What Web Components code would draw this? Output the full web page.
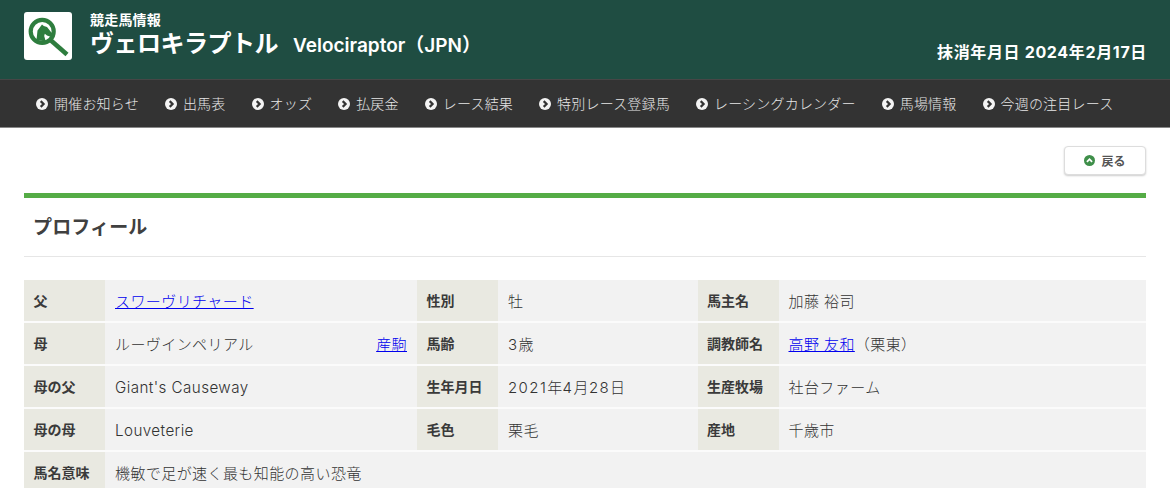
<!DOCTYPE html>
<html lang="ja"><head><meta charset="utf-8">
<style>
html,body{margin:0;padding:0;background:#fff;overflow:hidden}
body{font-family:Inter,"Noto Sans CJK JP","Noto Sans",sans-serif;color:#333;height:488px}
</style></head><body>
<jra-page>
  <jra-header slot="header" sub="競走馬情報" name="ヴェロキラプトル" en="Velociraptor（JPN）" date="抹消年月日 2024年2月17日"></jra-header>
  <jra-nav slot="nav">
    <jra-nav-item>開催お知らせ</jra-nav-item>
    <jra-nav-item>出馬表</jra-nav-item>
    <jra-nav-item>オッズ</jra-nav-item>
    <jra-nav-item>払戻金</jra-nav-item>
    <jra-nav-item>レース結果</jra-nav-item>
    <jra-nav-item>特別レース登録馬</jra-nav-item>
    <jra-nav-item>レーシングカレンダー</jra-nav-item>
    <jra-nav-item>馬場情報</jra-nav-item>
    <jra-nav-item>今週の注目レース</jra-nav-item>
  </jra-nav>
  <jra-back>戻る</jra-back>
  <jra-section title="プロフィール">
    <jra-grid>
      <jra-cell label="父"><a href="#">スワーヴリチャード</a></jra-cell>
      <jra-cell label="性別">牡</jra-cell>
      <jra-cell label="馬主名">加藤 裕司</jra-cell>
      <jra-cell label="母">ルーヴインペリアル<a href="#" slot="end">産駒</a></jra-cell>
      <jra-cell label="馬齢"><jra-num>3</jra-num>歳</jra-cell>
      <jra-cell label="調教師名"><a href="#">高野 友和</a>（栗東）</jra-cell>
      <jra-cell label="母の父"><jra-lat>Giant's Causeway</jra-lat></jra-cell>
      <jra-cell label="生年月日"><jra-num>2021</jra-num>年<jra-num>4</jra-num>月<jra-num>28</jra-num>日</jra-cell>
      <jra-cell label="生産牧場">社台ファーム</jra-cell>
      <jra-cell label="母の母"><jra-lat>Louveterie</jra-lat></jra-cell>
      <jra-cell label="毛色">栗毛</jra-cell>
      <jra-cell label="産地">千歳市</jra-cell>
      <jra-cell label="馬名意味" wide>機敏で足が速く最も知能の高い恐竜</jra-cell>
    </jra-grid>
  </jra-section>
</jra-page>
<script>
function def(name, html){
  customElements.define(name, class extends HTMLElement{
    constructor(){super();this.attachShadow({mode:'open'}).innerHTML=html;}
    connectedCallback(){
      const r=this.shadowRoot;
      r.querySelectorAll('[data-a]').forEach(e=>{e.textContent=this.getAttribute(e.dataset.a)||''});
      if(name==='jra-cell'&&this.hasAttribute('wide'))this.style.gridColumn='1 / -1';
    }
  });
}
def('jra-page',`<style>:host{display:block}
.main{padding:0 24px}</style>
<slot name="header"></slot><slot name="nav"></slot><div class="main"><slot></slot></div>`);
def('jra-header',`<style>
:host{display:flex;justify-content:space-between;background:#1f4d42;color:#fff;height:79px;box-sizing:border-box;padding:12px 24px 0}
.left{display:flex;gap:18px}
.logo{width:48px;height:48px;display:block}
.tx{display:flex;flex-direction:column}
.sub{font-size:14px;font-weight:700;line-height:16px;letter-spacing:.2px}
.row{display:flex;align-items:baseline;gap:15px;line-height:34px;margin-top:-1px}
.nm{font-size:24px;font-weight:700;letter-spacing:-.5px}
.en{font-size:19px;font-weight:600}
.date{font-size:16px;font-weight:700;letter-spacing:.65px;align-self:flex-start;margin-top:27px;line-height:26px;margin-right:-1px}
</style>
<div class="left"><svg class="logo" viewBox="0 0 48 48">
<rect width="48" height="48" rx="3" fill="#fff"/>
<circle cx="18.2" cy="19.4" r="11.5" fill="none" stroke="#2e7d3e" stroke-width="4.2"/>
<path fill="none" stroke="#2e7d3e" stroke-width="4.5" d="M27 28.5L43 42.5"/>
<path fill="#2e7d3e" d="M12.5 28L13.5 18.5 18 12.5 19.8 14 23 15 28.2 21.5 26.5 24.8 23 23.5 20.8 21.8 20.2 24 21.8 29.5Z"/>
</svg>
<div class="tx"><div class="sub" data-a="sub"></div><div class="row"><div class="nm" data-a="name"></div><div class="en" data-a="en"></div></div></div></div>
<div class="date" data-a="date"></div>`);
def('jra-nav',`<style>:host{display:flex;gap:26px;background:#333;height:49px;box-sizing:border-box;padding:0 36px;align-items:center;border-top:1px solid #464646;border-bottom:1px solid #888}</style><slot></slot>`);
def('jra-nav-item',`<style>:host{display:flex;align-items:center;gap:6px;color:#e6e6e6;font-size:14px;font-weight:300;letter-spacing:.2px;white-space:nowrap}
svg{width:12px;height:12px;display:block}
span{display:block;margin-top:-2px}</style>
<svg viewBox="0 0 12 12"><circle cx="6" cy="6" r="6" fill="#f4f4f4"/><path d="M4.7 3.1L7.6 6 4.7 8.9" fill="none" stroke="#333" stroke-width="2.2"/></svg><span><slot></slot></span>`);
def('jra-back',`<style>:host{display:flex;justify-content:flex-end;padding-top:18px}
.b{width:82px;height:29px;box-sizing:border-box;border:1px solid #ddd;border-radius:4px;box-shadow:0 1px 2px rgba(0,0,0,.2);display:flex;align-items:center;justify-content:center;gap:6px;font-size:12px;font-weight:700;color:#555;background:#fff}
svg{width:11px;height:11px;display:block}</style>
<div class="b"><svg viewBox="0 0 12 12"><circle cx="6" cy="6" r="6" fill="#3f8f4a"/><path d="M3.2 7.4L6 4.6 8.8 7.4" fill="none" stroke="#fff" stroke-width="2"/></svg><slot></slot></div>`);
def('jra-section',`<style>:host{display:block;margin-top:18px}
.bar{height:5px;background:#55ac46}
h2{margin:0;font-size:19px;font-weight:700;letter-spacing:.15px;line-height:60px;height:58px;padding-left:9px;border-bottom:1px solid #e6e6e6;color:#404040}
.c{margin-top:23px}</style>
<div class="bar"></div><h2 data-a="title"></h2><div class="c"><slot></slot></div>`);
def('jra-grid',`<style>:host{display:grid;grid-template-columns:393px 280.5px 448.5px;gap:0}</style><slot></slot>`);
def('jra-cell',`<style>:host{display:flex;height:43px;box-sizing:border-box;background:#f2f2f2;border-bottom:2px solid #fbfbfb;font-size:15px;font-weight:300;letter-spacing:.42px;color:#333}
.l{width:81px;flex:none;background:#e9e9e1;font-weight:700;font-size:14px;letter-spacing:0;padding:0 0 2px 9.5px;box-sizing:border-box;display:flex;align-items:center;color:#3a3a3a}
.v{flex:1;display:flex;align-items:center;justify-content:space-between;padding:0 10px;white-space:nowrap}
::slotted(a){color:#00e}
</style><div class="l" data-a="label"></div><div class="v"><span><slot></slot></span><slot name="end"></slot></div>`);
def('jra-lat',`<style>:host{display:inline;font-size:15.2px;letter-spacing:.42px;position:relative;top:1px}</style><slot></slot>`);
def('jra-num',`<style>:host{display:inline;letter-spacing:1.4px}</style><slot></slot>`);
</script></body></html>
